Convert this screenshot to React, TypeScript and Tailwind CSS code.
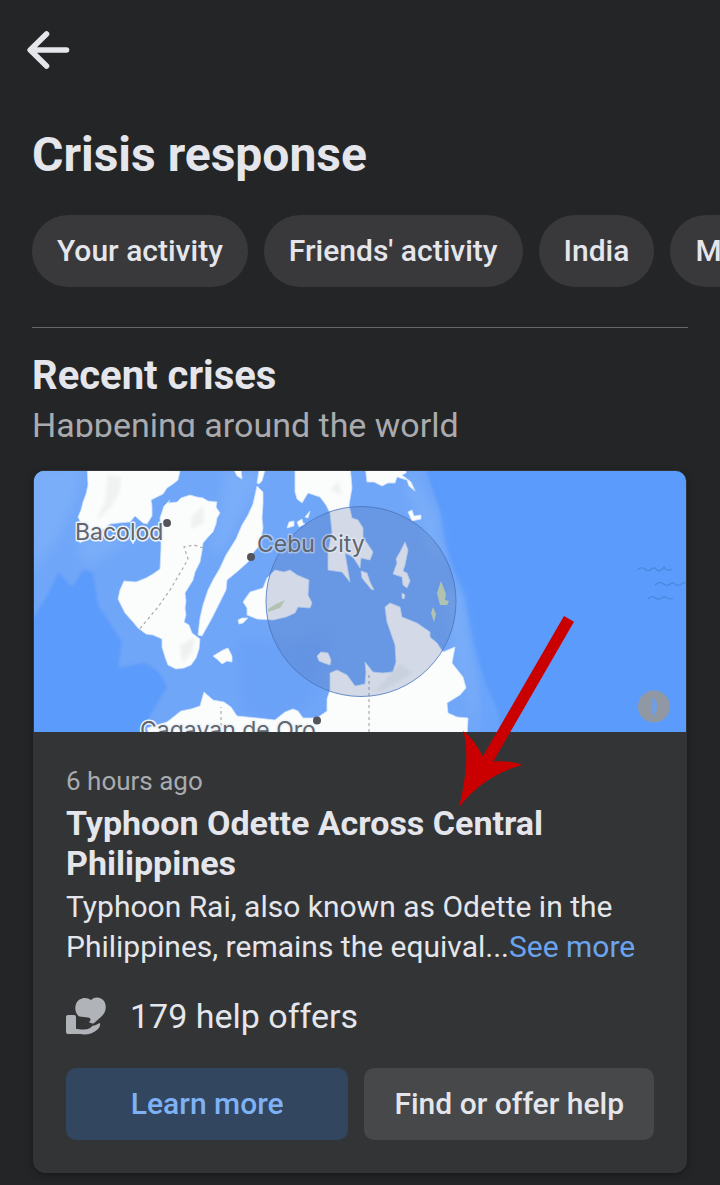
const filters = ["Your activity", "Friends' activity", "India", "Malaysia"];

function BackArrow() {
  return (
    <svg width="44" height="40" viewBox="0 0 44 40" fill="none" stroke="#e4e6eb" strokeWidth="5.6" strokeLinecap="round" strokeLinejoin="round" aria-hidden="true">
      <path d="M20.5 4 4.200 20l16.300 16M5 20h35.500" />
    </svg>
  );
}

function CrisisMap() {
  return (
    <svg className="block aspect-[652/261] w-full" viewBox="34 471 652 261" preserveAspectRatio="xMidYMid slice" role="img" aria-label="Map of the central Philippines">
      <defs>
        <filter id="soft" x="-10%" y="-10%" width="120%" height="120%">
          <feGaussianBlur stdDeviation="1.500" />
        </filter>
        <filter id="wide" x="-20%" y="-20%" width="140%" height="140%">
          <feGaussianBlur stdDeviation="6" />
        </filter>
      </defs>
      <rect x="34" y="471" width="652" height="261" fill="#5b9bfb" />
      <g filter="url(#soft)">
        <path d="M424 465C431 490 443 510 443 535C449 566 461 578 466 602C469 631 479 662 486 684C496 705 501 717 500 738H440L408 465Z" fill="#69a4fb" />
        <path d="M20 465H424C432 490 438 500 440 520C445 550 452 560 458 584C466 610 468 640 474 660C484 690 478 710 482 738H140L152 712L167 687C162 674 152 664 143 663L118 668L122 642L98 605L93 573C88 571 84 568 82 572L72 587L58 572C52 590 40 607 20 640Z" fill="#6fa6f8" />
      </g>
      <g filter="url(#wide)">
        <path d="M30 465h54l-8 34-16 36-30 40ZM80 535l50 5-38 24-14-8ZM225 471h38l-18 38-28 50-6-18 10-27ZM410 471l28 50 4 40-8-4-28-70ZM446 590l14 0 12 80 8 60-14-40-12-40Z" fill="#7aaef9" />
        <path d="M235 640c40 4 60 0 95-4l-16 60-30 30-40-14Z" fill="#6aa2f8" />
      </g>
      <g fill="#fbfcfc" stroke="#cfe3fc" strokeWidth="0.800" strokeLinejoin="round">
        <path d="M87 465l1 20-2 9-3 8-2 8-3 7 3 6-3 14 2 6 6-4 4-5 10-2 10-8 8-1 12-1 5-6 8 7 4 1 5-8v-10l-1-6 6-3 6-3 4-6 6-4 5-4 2-9ZM130 538l3 6 3-6ZM120 536l2 5 2-4Z" />
        <path d="M168 503l9-1 4-4 9-3 7 2 6 1 5 3 9 1-1 5 4 6-3 5-1 6-3 8-4 4-6 7-1 8-2 11-5 10-2 8-8 13 1 8-1 7 1 7-2 7 5 3 3 8 8 6-1 10-3 9-5 7-7 3-8 1-8-4-3-8-3-10v-8l-9-4-7-1-8-6-5-6-8-9-3-6-4-8 2-9 4-9 12 1 10-4 7-4 7-5 1-20v-19l-1-12 4-12 6-6Z" />
        <path d="M257 486l6 6v12l-1 14 1 10-3 17-7 8-5 9-10 9-11 9-1 10-4 8-5 10-5 10-10 18-4-1 2-17 3-13 5-15 5-10 7-12 6-13 10-16 6-14 6-10 5-11ZM257 483l2-13h6l-3 11-3 3ZM234 470l7-1 1 10-5-3Z" />
        <path d="M295 465v27l2 7 5 4 6-10 12 4 6 8 4 8 2 19-4 20v18l14 2 8 10-3-17-2-12 8 4 7 11 1-10 9 2 3-8-6-9-4-5v-10l-5-8-6-2-3-13 3-17-2-23ZM361 571l6 2 3 9 4 8-3-1-9-11ZM365 465l2 17 7 0 8 4 6-3 7 0 2-6 10 3 2 6 6 5-4-9-9-7 4-2V465ZM408 512l4-2 2 6 7-1v4l-9 2ZM287 528l2-6 5-1v5ZM297 522l5-3 1 4 2 1-6 3ZM305 517l5-6-2 7Z" />
        <path d="M243 602l7-10 13-4 4-10 8-8 9 2 6-2 7 5 12 5-1 15 4 8-2 5-12-1-3 6-9 4-13 3-16-1-10-4v-7ZM238 620l4-2 6 0-5 5-4 1ZM317 656l4-4 7 1 3 7-1 5-6-2-5-2Z" />
        <path d="M385 607l5-4 10 4 2 10 15 6 13 9v5l7 6 6 9 12-5-3 16 11 14 3 11-6 7-13 8 1 10 9 4 11 1-1 20H150l-3-10 20-6 14-11 10-2 9-3 4-14 9 8 11 2 7 5 6 9 20 2 18 2 10-8 8-3 5 2 5 7 14 0 10-7v-12l3-9v-17l7-3 10 5 8 11 10-2 1-12-1-10 8 10 9 1 11-1 3-10-1-17-8-23Z" />
        <path d="M213 656l10-6 5-2 4 8v6l-5-1-5 3-4-4Z" />
        <path d="M405 542l3 8-3 15-2 6 4 2 3 8-3 7-4-3-1-8-9-3 4-11-1-4 4-7Z M402 593l3 2-1 4-2-1Z" />
      </g>
      <g fill="#edf0f0" filter="url(#soft)" opacity="0.850">
        <path d="M108 475l13 2-2 16-8 14-15 14 9-19ZM192 516l11-10 1 17-13 6ZM180 645l15-8-3 16-10 10ZM330 490l9-9 2 14ZM374 692l26-28 13 9-27 16Z" />
      </g>
      <path d="M268 609l8-5 9-4-5 8-12 4ZM441 581l5 13-1 6 4 1-2 4-7 0-3-12ZM433 607l3 7-2 8-3-9Z" fill="#cfdfb5" />
      <path d="M221 732v-25M203 548l-9-3-10 2 4 12-5 9-13 22-12 17-20 24M369 732v-59" fill="none" stroke="#a9abb0" strokeWidth="1.200" strokeDasharray="3 3" />
      <circle cx="361" cy="601.500" r="95" fill="#4c69a2" fillOpacity="0.230" stroke="#4873bd" strokeWidth="0.800" />
      <g fill="none" stroke="#4786dc" strokeWidth="1.100">
        <path d="M637 570c4-3 6-3 9 0 4 3 5-3 9-2 3 4 6 4 9-1 3 5 6 3 8 2M655 585c5-4 7-3 10 0 4 2 6-3 9-2 3 4 6 2 9 0h4M648 599c4-4 6-2 9 0 4 1 5-3 9-2 3 3 5 2 7 1" />
      </g>
      <circle cx="654" cy="706.500" r="16" fill="#9098a4" />
      <path d="M654 697c4 5 4 14 0 19c-4-5-4-14 0-19Z" fill="#719de1" />
      <g fill="#53545b">
        <circle cx="167" cy="523" r="4" />
        <circle cx="251" cy="557" r="4" />
        <circle cx="317" cy="720.500" r="4" />
      </g>
      <g className="font-['Inter',sans-serif]" fill="#60656e" stroke="#eef3f8" strokeWidth="3" strokeLinejoin="round" paintOrder="stroke" fontSize="23">
        <text x="75" y="540">Bacolod</text>
        <text x="257" y="552" strokeOpacity="0.450">Cebu City</text>
        <text x="140" y="738">Cagayan de Oro</text>
      </g>
    </svg>
  );
}

function HelpIcon() {
  return (
    <svg width="40" height="38" viewBox="0 0 40 38" aria-hidden="true">
      <path d="M25 3c4-4 10-3 13 1 3 5 2 11-2 15l-9 8-11-5c-6-4-8-9-6-15 2-6 10-8 15-4Z" fill="#b0b3b8" />
      <path d="M9 20.500C14 18.500 17 20.500 22 20.500C25.500 21 25.500 25 21 25.500C25 27.500 30 27 34 24L36 28L26 34H9Z" fill="#333436" />
      <path d="M2 18h6q2 0 2 2v15q0 2-2 2H2q-2 0-2-2V20q0-2 2-2Z" fill="#b0b3b8" />
      <path d="M9 32C12 31.500 14 33 18 32.500C22 32.300 25 31 26.500 28.700C29.500 28.500 31.500 27.300 33.300 26C35 26.500 34 30 31.500 32.500C27.500 36.500 20 38.500 14 37H9Z" fill="#b0b3b8" />
    </svg>
  );
}

function PointerArrow() {
  return (
    <svg className="pointer-events-none absolute top-[145px] left-[425px]" width="116" height="193" viewBox="459 616 116 193" aria-hidden="true">
      <path d="M564 616L574 621.700L493.300 761.500C504 760.500 514 761.500 522.700 765C498 771 475 786 459 807.500C464 786 470 757 463.300 731C471 737 478 746 482.700 756.500Z" fill="#ca0000" />
    </svg>
  );
}

export default function App() {
  return (
    <main className="min-h-screen overflow-hidden bg-[#242527] pb-3 font-['Roboto',sans-serif] text-[#e4e6eb]">
      <header className="px-8 pt-[30px]">
        <button type="button" aria-label="Back" className="-ml-1.5 block">
          <BackArrow />
        </button>
        <h1 className="mt-[57px] text-[48px] leading-[56px] font-bold">Crisis response</h1>
      </header>

      <nav aria-label="Crisis filters" className="mt-8 flex gap-4 overflow-hidden pl-8">
        {filters.map((filter) => (
          <button key={filter} type="button" className="h-[72px] shrink-0 rounded-full bg-[#39393b] px-[25px] text-[30px] leading-[36px] font-medium whitespace-nowrap">
            {filter}
          </button>
        ))}
      </nav>

      <hr className="mx-8 mt-10 border-0 border-t border-[#67686b]" />

      <section className="mt-6">
        <div className="px-8">
          <h2 className="text-[40px] leading-[48px] font-bold">Recent crises</h2>
          <p className="mt-1 h-[33px] overflow-hidden text-[34px] leading-[42px] text-[#a9abaf]">Happening around the world</p>
        </div>

        <article className="relative mx-[33px] mt-[33px] rounded-xl border border-[#333436] bg-[#333436] shadow-[0_2px_6px_rgba(0,0,0,0.35)]">
          <div className="overflow-hidden rounded-t-[10px]">
            <CrisisMap />
          </div>
          <div className="px-8 pt-[31px] pb-8">
            <p className="text-[26px] leading-[36px] text-[#a9abaf]">6 hours ago</p>
            <h3 className="mt-1 text-[34px] leading-[40px] font-bold">Typhoon Odette Across Central Philippines</h3>
            <p className="mt-1 text-[30px] leading-[40px]">
              Typhoon Rai, also known as Odette in the Philippines, remains the equival...
              <a href="#more" className="text-[#6ba4ee]">See more</a>
            </p>
            <div className="mt-7 flex items-center gap-6">
              <HelpIcon />
              <span className="text-[34px] leading-[42px]">179 help offers</span>
            </div>
            <div className="mt-[31px] flex gap-4">
              <button type="button" className="h-[72px] flex-1 rounded-[10px] bg-[#32465f] text-[30px] leading-[36px] font-medium text-[#7fb2f5]">Learn more</button>
              <button type="button" className="h-[72px] shrink-0 rounded-[10px] bg-[#474849] px-[30px] text-[30px] leading-[36px] font-medium">Find or offer help</button>
            </div>
          </div>
          <PointerArrow />
        </article>
      </section>
    </main>
  );
}
